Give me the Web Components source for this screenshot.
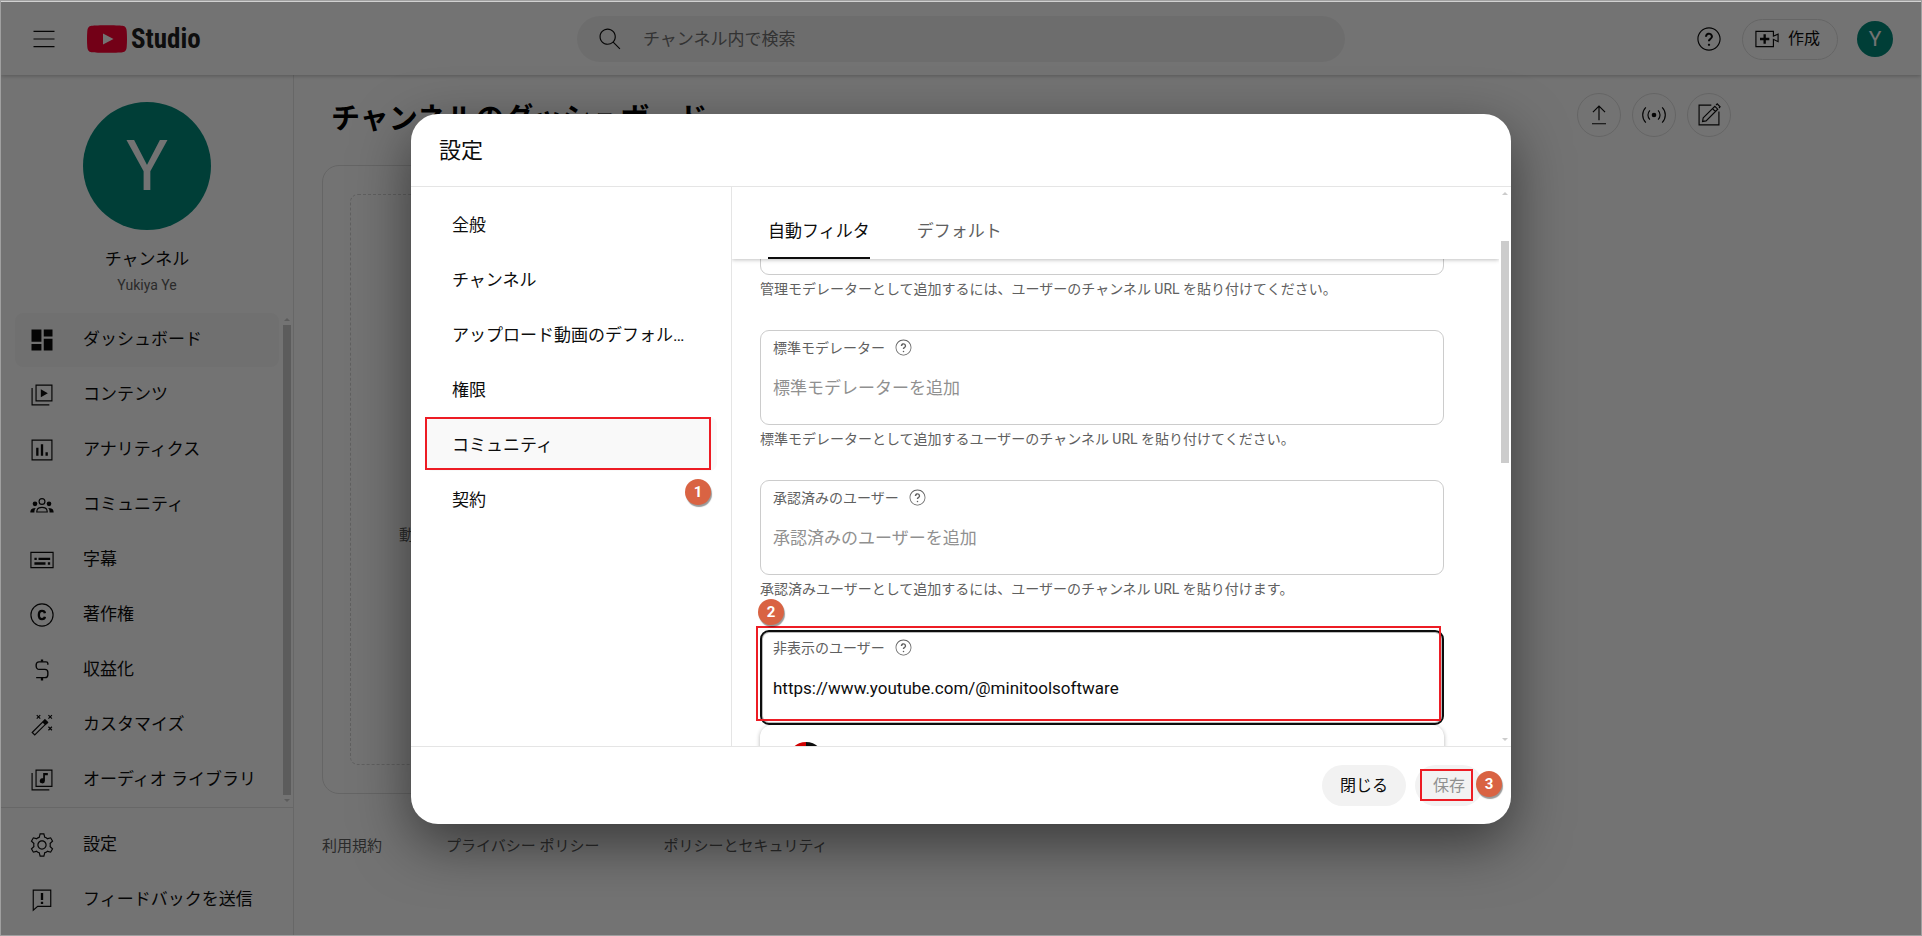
<!DOCTYPE html>
<html lang="ja">
<head>
<meta charset="utf-8">
<title>チャンネルのダッシュボード - YouTube Studio</title>
<style>
  html, body { height: 100%; }
  body {
    margin: 0;
    font-family: Roboto, "Noto Sans CJK JP", sans-serif;
    font-size: 17px;
    line-height: 24px;
    color: #0d0d0d;
    background: #fff;
  }
</style>
</head>
<body>
<studio-app></studio-app>

<script>
const ICONS = {
  menu: '<path d="M21 6H3V5h18zM21 11.500H3v1h18zM21 18H3v1h18z"/>',
  search: '<path d="M20.870 20.170l-5.590-5.590C16.350 13.350 17 11.750 17 10c0-3.870-3.130-7-7-7s-7 3.130-7 7 3.130 7 7 7c1.750 0 3.350-.650 4.580-1.710l5.590 5.590zM10 16c-3.310 0-6-2.690-6-6s2.690-6 6-6 6 2.690 6 6-2.690 6-6 6z"/>',
  help: '<path d="M15.36,9.96c0,1.09-0.67,1.67-1.31,2.24c-0.53,0.47-1.03,0.9-1.16,1.6L12.85,14h-1.75l0.03-0.28c0.14-1.17,0.8-1.76,1.47-2.27c0.52-0.4,1.01-0.77,1.01-1.49c0-0.51-0.23-0.97-0.63-1.29c-0.4-0.31-0.92-0.42-1.42-0.29c-0.59,0.15-1.05,0.67-1.19,1.34L10.32,10H8.57l0.06-0.42c0.2-1.4,1.15-2.53,2.42-2.87c1.05-0.29,2.14-0.08,2.98,0.57C14.88,7.92,15.36,8.9,15.36,9.96z M12,18c0.55,0,1-0.45,1-1s-0.45-1-1-1s-1,0.45-1,1S11.45,18,12,18z M12,3c-4.96,0-9,4.04-9,9s4.04,9,9,9s9-4.04,9-9S16.96,3,12,3 M12,2c5.52,0,10,4.48,10,10s-4.48,10-10,10S2,17.52,2,12S6.48,2,12,2L12,2z"/>',
  create: '<path d="M14,13h-3v3H9v-3H6v-2h3V8h2v3h3V13z M17,6H3v12h14v-6.39l4,1.83V8.56l-4,1.83V6 M18,5v3.83L22,7v8l-4-1.83V19H2V5H18L18,5z"/>',
  dashboard: '<path d="M3 3h8.500v10.500H3zM13.500 3H21v6h-7.500zM3 15.500h8.500V21H3zM13.500 11H21v10h-7.500z"/>',
  content: '<path fill="none" stroke="currentColor" d="M6.900 3.500h13.600v13.600H6.900zM3.500 6v14.500H18.300"/><path d="M11 7l6 3.500-6 3.500z"/>',
  analytics: '<path fill="none" stroke="currentColor" d="M3.500 3.500h17v17h-17z"/><path d="M7 10h2v7H7zM11 7h2v10h-2zM15 14h2v3h-2z"/>',
  community: '<g fill="none" stroke="currentColor"><circle cx="12" cy="9" r="2.500"/><path d="M7.500 18c0-2.600 1.500-4 4.500-4s4.500 1.400 4.500 4z"/></g><circle cx="6" cy="11" r="2"/><circle cx="18" cy="11" r="2"/><path d="M6.700 14.500C5.600 15.700 5.500 17 5.500 18.500H2c0-2.200.9-4 4.700-4zM17.300 14.500c1.100 1.200 1.200 2.500 1.200 4H22c0-2.200-.9-4-4.700-4z"/>',
  subtitles: '<path fill="none" stroke="currentColor" d="M2.500 5.500h19v13h-19z"/><path d="M5.500 10h2v2h-2zM9 10h10v2H9zM5.500 14h9.500v2H5.500zM17 14h2v2h-2z"/>',
  copyright: '<circle cx="12" cy="12" r="9.500" fill="none" stroke="currentColor"/><path fill="none" stroke="currentColor" stroke-width="2" d="M14.500 10.500c-.2-1.300-1.100-2-2.500-2-1.900 0-2.700 1.400-2.700 3.500s.8 3.500 2.700 3.500c1.400 0 2.300-.7 2.500-2"/>',
  money: '<path fill="none" stroke="currentColor" stroke-width="1.200" d="M17 7.500V6.300c0-.9-.6-1.300-1.500-1.300h-6C8 5 7 6 7 7.500v1C7 10 8 11.500 9.500 11.500h5c1.500 0 2.500 1 2.500 2.500v2c0 1.500-1 2.500-2.500 2.500H7"/><path d="M11 3h2v2h-2zM11 18.500h2V21h-2z"/>',
  wand: '<path fill="none" stroke="currentColor" d="M3.600 18.400L14.500 7.500l2.200 2.200L5.800 20.600z"/><path d="M12.300 9.700l2.200-2.700 3 3-2.700 2.200z"/><path fill="none" stroke="currentColor" d="M7.500 3.500l3 3M10.500 3.500l-3 3M17.500 3.500l3 3M20.500 3.500l-3 3M17.500 13.500l3 3M20.500 13.500l-3 3"/>',
  audio: '<path fill="none" stroke="currentColor" d="M6.900 3.500h13.600v14H6.900zM3.500 6v14.500H18.300"/><path d="M13 6h4v2h-2.500v4.700a2.200 2.200 0 1 1-1.500-2.100z"/>',
  settings: '<path d="M12,9c1.650,0,3,1.350,3,3s-1.350,3-3,3s-3-1.350-3-3S10.350,9,12,9 M12,8c-2.210,0-4,1.790-4,4s1.790,4,4,4s4-1.790,4-4 S14.210,8,12,8L12,8z M13.220,3l0.550,2.200l0.130,0.510l0.500,0.180c0.610,0.230,1.190,0.560,1.720,0.980l0.400,0.320l0.500-0.140l2.170-0.620l1.220,2.110 l-1.630,1.590l-0.370,0.360l0.080,0.510c0.050,0.320,0.080,0.640,0.080,0.980s-0.030,0.660-0.080,0.980l-0.080,0.510l0.370,0.360l1.630,1.590l-1.220,2.110 l-2.170-0.620l-0.500-0.140l-0.400,0.320c-0.530,0.430-1.110,0.760-1.720,0.980l-0.500,0.180l-0.130,0.510L13.220,21h-2.440l-0.550-2.200l-0.130-0.510 l-0.500-0.180C9,17.880,8.420,17.550,7.880,17.120l-0.400-0.320l-0.500,0.140l-2.170,0.620L3.600,15.440l1.630-1.590l0.370-0.360l-0.080-0.510 C5.470,12.660,5.440,12.330,5.440,12s0.030-0.660,0.080-0.980l0.080-0.510l-0.370-0.360L3.600,8.560l1.220-2.110l2.170,0.620l0.500,0.140l0.400-0.320 C8.420,6.450,9,6.120,9.610,5.900l0.500-0.180l0.130-0.510L10.780,3H13.220 M14,2h-4L9.260,4.960c-0.730,0.270-1.400,0.660-2,1.140L4.340,5.270l-2,3.460 l2.190,2.130C4.470,11.230,4.440,11.610,4.440,12s0.030,0.770,0.090,1.140l-2.190,2.130l2,3.460l2.920-0.830c0.600,0.480,1.270,0.870,2,1.140L10,22h4 l0.740-2.960c0.730-0.270,1.400-0.660,2-1.140l2.920,0.830l2-3.460l-2.190-2.130c0.060-0.370,0.090-0.750,0.090-1.140s-0.030-0.770-0.090-1.140l2.190-2.130 l-2-3.460L16.740,6.100c-0.600-0.480-1.270-0.870-2-1.140L14,2L14,2z"/>',
  feedback: '<path fill="none" stroke="currentColor" d="M4.500 3.500h15v14H8.300l-3.800 3.300z"/><path d="M11 6h2v6h-2zM11 13.500h2v2h-2z"/>',
  upload: '<path fill="none" stroke="currentColor" d="M12 16.500V4.500M6.800 9.500L12 4.300l5.200 5.200M6 19.500h12"/>',
  live: '<circle cx="12" cy="12" r="2"/><path fill="none" stroke="currentColor" d="M8.500 8a5.600 5.600 0 0 0 0 8M15.500 8a5.600 5.600 0 0 1 0 8M5 5.500a9.200 9.200 0 0 0 0 13M19 5.500a9.200 9.200 0 0 1 0 13"/>',
  edit: '<path fill="none" stroke="currentColor" d="M14 3.500H3.500v17h17V9M7 14.500L17 4.500l2.500 2.500-10 10-3 .5zM15 6.500l2.500 2.500M18 3.500l1-1 2.500 2.500-1 1"/>'
};

const define = (name, html, setup) => customElements.define(name, class extends HTMLElement {
  constructor() {
    super();
    this.attachShadow({ mode: 'open' });
  }
  connectedCallback() {
    const template = document.createElement('template');
    template.innerHTML = typeof html === 'function' ? html(this) : html;
    this.shadowRoot.replaceChildren(template.content.cloneNode(true));
    if (setup) setup(this);
  }
});

define('studio-icon', el => `
  <style>
    :host { display: block; flex: none; width: var(--icon-size, 28px); height: var(--icon-size, 28px); }
    svg { display: block; width: 100%; height: 100%; fill: currentColor; }
  </style>
  <svg viewBox="0 0 24 24" aria-hidden="true">${ICONS[el.getAttribute('name')]}</svg>`);

define('user-avatar', `
  <style>
    :host { display: grid; place-items: center; flex: none; width: 36px; height: 36px; border-radius: 50%;
      background: #00897b; color: #fff; font-size: 21px; line-height: 1; }
    :host([large]) { width: 128px; height: 128px; font-size: 70px; }
  </style>
  <slot></slot>`);

/* Outline around a step's target. */
define('step-outline', `
  <style>:host { display: block; position: absolute; z-index: 2; box-sizing: border-box; border: 2px solid #ed1c24; pointer-events: none; }</style>`);

define('step-badge', `
  <style>
    :host { display: grid; place-items: center; position: absolute; z-index: 3; width: 26px; height: 26px; border-radius: 50%;
      background: #d96343; color: #fff; font-size: 15px; line-height: 20px; font-weight: 700; box-shadow: 1px 2px 1px rgba(0,0,0,.4); }
  </style>
  <slot></slot>`);

define('scroll-track', `
  <style>
    :host { display: flex; flex-direction: column; align-items: center; flex: none; width: 12px; box-sizing: border-box; padding: 5px 0; }
    i { width: 0; height: 0; border: 3px solid transparent; }
    .up { border-top: 0; border-bottom-color: #ccc; }
    .down { border-bottom: 0; border-top-color: #ccc; }
    .rail { flex: 1; width: 8px; padding: var(--before, 4px) 0 var(--after, 4px); display: flex; box-sizing: border-box; }
    .thumb { flex: 1; background: #ccc; }
  </style>
  <i class="up"></i><div class="rail"><div class="thumb"></div></div><i class="down"></i>`);

define('studio-header', `
  <style>
    :host { display: grid; grid-template-columns: 1fr 40% 1fr; align-items: center; flex: none; height: 73px; box-sizing: border-box;
      padding-bottom: 15px; padding-top: 14px; background: #fff; box-shadow: 0 1px 4px rgba(0,0,0,.25); position: relative; z-index: 1; }
    .brand, .tools { display: flex; align-items: center; }
    .brand { padding-left: 29px; gap: 29px; }
    button { font: inherit; color: inherit; background: none; border: 0; padding: 0; cursor: pointer; }
    .logo { display: flex; align-items: center; gap: 4px; color: #212121; text-decoration: none; }
    .logo svg { display: block; width: 40px; height: 28px; }
    .logo span { font: 700 27px/36px "Liberation Sans Narrow", "Roboto Condensed", sans-serif; }
    .search { display: flex; align-items: center; height: 46px; border-radius: 23px; background: #f2f2f2; padding: 0 20px 0 19px; gap: 19px; }
    input { flex: 1; min-width: 0; border: 0; outline: 0; background: none; font: inherit; padding: 0; height: 40px; }
    input::placeholder { color: #717171; opacity: 1; }
    .tools { justify-content: flex-end; padding-right: 28px; gap: 19px; }
    .create { display: flex; align-items: center; gap: 7px; height: 41px; border: 1px solid #e0e0e0; border-radius: 21px; padding: 0 17px 0 10px; font-size: 16px; }
  </style>
  <div class="brand">
    <button aria-label="メニュー"><studio-icon name="menu"></studio-icon></button>
    <a class="logo" href="#" aria-label="YouTube Studio">
      <svg viewBox="0 0 40 28"><path fill="#f03" d="M4.500.8C10 0 30 0 35.500.8 38.500 1.200 39.500 3 39.700 6c.4 5 .4 11 0 16-.2 3-1.200 4.800-4.200 5.200-5.500.8-25.500.8-31 0C1.500 26.800.5 25 .3 22c-.4-5-.4-11 0-16C.5 3 1.500 1.200 4.500.8z"/><path fill="#fff" d="M16 8.500l10.500 5.500L16 19.500z"/></svg>
      <span>Studio</span>
    </a>
  </div>
  <div class="search">
    <studio-icon name="search"></studio-icon>
    <input type="text" aria-label="検索" placeholder="チャンネル内で検索">
  </div>
  <div class="tools">
    <button aria-label="ヘルプ"><studio-icon name="help"></studio-icon></button>
    <button class="create"><studio-icon name="create"></studio-icon>作成</button>
    <user-avatar>Y</user-avatar>
  </div>`);

define('nav-link', el => `
  <style>
    :host { display: block; }
    a { display: flex; align-items: center; gap: 27px; height: 54px; margin-bottom: 1px; padding-left: 13px; border-radius: 8px;
      color: inherit; text-decoration: none; white-space: nowrap; }
    :host([active]) a { background: #f9f9f9; }
    span { padding-bottom: 2px; }
  </style>
  <a href="#"><studio-icon name="${el.getAttribute('icon')}"></studio-icon><span><slot></slot></span></a>`);

define('studio-sidebar', `
  <style>
    :host { display: flex; flex-direction: column; flex: none; width: 293px; box-sizing: border-box; border-right: 1px solid #e5e5e5; }
    .channel { display: flex; flex-direction: column; align-items: center; padding: 27px 0 16px; }
    .channel b { font-weight: 400; margin-top: 17px; }
    .channel small { font-size: 14px; line-height: 24px; color: #606060; margin-top: 2px; }
    .scroller { flex: 1; min-height: 0; display: flex; overflow: hidden; }
    nav { flex: 1; padding: 0 2px 0 14px; }
    .bottom { border-top: 1px solid #e5e5e5; padding: 10px 14px 7px; }
  </style>
  <div class="channel">
    <user-avatar large>Y</user-avatar>
    <b>チャンネル</b>
    <small>Yukiya Ye</small>
  </div>
  <div class="scroller">
    <nav>
      <nav-link icon="dashboard" active>ダッシュボード</nav-link>
      <nav-link icon="content">コンテンツ</nav-link>
      <nav-link icon="analytics">アナリティクス</nav-link>
      <nav-link icon="community">コミュニティ</nav-link>
      <nav-link icon="subtitles">字幕</nav-link>
      <nav-link icon="copyright">著作権</nav-link>
      <nav-link icon="money">収益化</nav-link>
      <nav-link icon="wand">カスタマイズ</nav-link>
      <nav-link icon="audio">オーディオ ライブラリ</nav-link>
    </nav>
    <scroll-track></scroll-track>
  </div>
  <div class="bottom">
    <nav-link icon="settings">設定</nav-link>
    <nav-link icon="feedback">フィードバックを送信</nav-link>
  </div>`);

define('studio-dashboard', `
  <style>
    :host { display: flex; flex-direction: column; flex: 1; min-width: 0; box-sizing: border-box; padding: 18px 190px 0 28px; }
    .top { display: flex; align-items: center; justify-content: space-between; padding-left: 9px; }
    h1 { margin: 0; padding-top: 8px; font-size: 29px; line-height: 36px; font-weight: 700; color: #000; }
    .actions { display: flex; gap: 11px; }
    button { display: grid; place-items: center; width: 44px; height: 44px; padding: 0; border: 1px solid #e0e0e0; border-radius: 50%; background: none; color: inherit; }
    .card { flex: none; display: flex; width: 456px; height: 629px; box-sizing: border-box; margin-top: 28px; padding: 28px 27px; border: 1px solid #e0e0e0; border-radius: 17px; }
    .empty { flex: 1; display: flex; align-items: center; padding: 110px 48px 0; border: 1px dashed #d5d5d5; border-radius: 8px; font-size: 15px; color: #606060; box-sizing: border-box; }
    footer { display: flex; gap: 64px; margin-top: 40px; font-size: 15px; }
    a { color: #606060; text-decoration: none; }
  </style>
  <div class="top">
    <h1>チャンネルのダッシュボード</h1>
    <div class="actions">
      <button aria-label="動画をアップロード"><studio-icon name="upload"></studio-icon></button>
      <button aria-label="ライブ配信を開始"><studio-icon name="live"></studio-icon></button>
      <button aria-label="投稿を作成"><studio-icon name="edit"></studio-icon></button>
    </div>
  </div>
  <div class="card"><div class="empty">動画</div></div>
  <footer>
    <a href="#">利用規約</a>
    <a href="#">プライバシー ポリシー</a>
    <a href="#">ポリシーとセキュリティ</a>
  </footer>`);

define('settings-item', `
  <style>
    :host { display: block; position: relative; margin-bottom: 1px; }
    a { display: block; height: 54px; line-height: 56px; padding: 0 27px; border-radius: 8px; color: inherit; text-decoration: none;
      box-sizing: border-box; overflow: hidden; white-space: nowrap; text-overflow: ellipsis; }
    :host([active]) a { background: #f9f9f9; }
  </style>
  <a href="#"><slot></slot></a>
  <slot name="marks"></slot>`);

define('user-field', el => `
  <style>
    :host { display: block; height: 150px; font-size: 14px; line-height: 20px; color: #606060; }
    .box { position: relative; height: 95px; box-sizing: border-box; border: 1px solid #ccc; border-radius: 9px; padding: 6px 12px 0; }
    .row { display: flex; align-items: center; gap: 9px; height: 21px; --icon-size: 19px; }
    input { display: block; width: 100%; height: 28px; margin-top: 16px; padding: 0; border: 0; outline: 0; background: none; font: inherit; font-size: 17px; line-height: 24px; color: #0d0d0d; }
    input::placeholder { color: #909090; opacity: 1; }
    p { margin: 4px 0 0; }
    :host([focused]) .box { border: 2px solid #0d0d0d; padding: 5px 11px 0; box-shadow: inset 0 0 0 1px #bbb; }
    step-outline { inset: -6px 1px 2px -6px; }
    step-badge { left: -4px; top: -33px; }
  </style>
  <div class="box">
    <div class="row"><label for="v">${el.getAttribute('label')}</label><studio-icon name="help"></studio-icon></div>
    <input id="v" type="text" placeholder="${el.getAttribute('placeholder') || ''}" value="${el.getAttribute('value') || ''}">
    ${el.hasAttribute('step') ? `<step-outline></step-outline><step-badge>${el.getAttribute('step')}</step-badge>` : ''}
  </div>
  ${el.hasAttribute('hint') ? `<p>${el.getAttribute('hint')}</p>` : ''}`);

define('user-suggestion', `
  <style>
    :host { display: block; height: 72px; margin: -55px 0 0; border-radius: 12px; padding: 17px 28px; background: #fff; box-shadow: 0 1px 4px rgba(0,0,0,.3); }
    svg { display: block; width: 36px; height: 36px; }
  </style>
  <svg viewBox="0 0 36 36" aria-hidden="true"><path fill="#d00000" d="M18 0a18 18 0 0 0 0 36z"/><path fill="#0d0d0d" d="M18 0a18 18 0 0 1 0 36z"/></svg>`);

define('settings-dialog', `
  <style>
    :host { display: flex; flex-direction: column; width: min(1100px, 92%); height: min(710px, 92%); border-radius: 27px; background: #fff; overflow: hidden; box-shadow: 0 19px 56px rgba(0,0,0,.5); }
    header { flex: none; padding: 2px 28px 0; border-bottom: 1px solid #e5e5e5; }
    h2 { margin: 0; font-size: 22px; line-height: 70px; font-weight: 400; }
    .body { flex: 1; min-height: 0; display: flex; }
    .menu { flex: none; width: 321px; box-sizing: border-box; border-right: 1px solid #e5e5e5; padding: 10px 14px; }
    .menu step-outline { inset: 0 6px 1px 0; }
    .menu step-badge { right: 6px; top: 62px; }
    .pane { flex: 1; min-width: 0; display: flex; flex-direction: column; }
    .tabs { flex: none; display: flex; gap: 47px; height: 72px; padding-left: 36px; position: relative; z-index: 4; background: #fff; box-shadow: 0 1px 4px rgba(0,0,0,.25); clip-path: inset(0 0 -8px 0); }
    .tabs button { font: inherit; color: #606060; background: none; border: 0; border-bottom: 2px solid transparent; padding: 18px 0 0; }
    .tabs button[aria-selected=true] { color: #0d0d0d; border-bottom-color: #0d0d0d; }
    .fields { flex: 1; min-height: 0; overflow-y: auto; scrollbar-width: none; padding: 0 55px 0 28px; }
    scroll-track { --before: 46px; --after: 275px; }
    .actions { flex: none; display: flex; justify-content: flex-end; gap: 9px; padding: 18px 28px; border-top: 1px solid #e5e5e5; }
    .actions button { font: inherit; font-size: 16px; height: 41px; border: 0; border-radius: 21px; padding: 0 18px; background: #f2f2f2; color: #0d0d0d; }
    .actions button:disabled { color: #909090; }
    .save { position: relative; }
    .save step-outline { inset: 4px 10px 5px 5px; }
    .save step-badge { left: 61px; top: 6px; }
  </style>
  <header><h2>設定</h2></header>
  <div class="body">
    <nav class="menu">
      <settings-item>全般</settings-item>
      <settings-item>チャンネル</settings-item>
      <settings-item>アップロード動画のデフォルト設定</settings-item>
      <settings-item>権限</settings-item>
      <settings-item active>コミュニティ<step-outline slot="marks"></step-outline><step-badge slot="marks">1</step-badge></settings-item>
      <settings-item>契約</settings-item>
    </nav>
    <div class="pane">
      <div class="tabs" role="tablist">
        <button role="tab" aria-selected="true">自動フィルタ</button>
        <button role="tab" aria-selected="false">デフォルト</button>
      </div>
      <div class="fields">
        <user-field label="管理モデレーター" placeholder="管理モデレーターを追加" hint="管理モデレーターとして追加するには、ユーザーのチャンネル URL を貼り付けてください。"></user-field>
        <user-field label="標準モデレーター" placeholder="標準モデレーターを追加" hint="標準モデレーターとして追加するユーザーのチャンネル URL を貼り付けてください。"></user-field>
        <user-field label="承認済みのユーザー" placeholder="承認済みのユーザーを追加" hint="承認済みユーザーとして追加するには、ユーザーのチャンネル URL を貼り付けます。"></user-field>
        <user-field focused step="2" label="非表示のユーザー" value="https://www.youtube.com/@minitoolsoftware"></user-field>
        <user-suggestion></user-suggestion>
      </div>
    </div>
    <scroll-track></scroll-track>
  </div>
  <div class="actions">
    <button>閉じる</button>
    <div class="save"><button disabled>保存</button><step-outline></step-outline><step-badge>3</step-badge></div>
  </div>`,
  el => { el.shadowRoot.querySelector('.fields').scrollTop = 79; });

define('studio-app', `
  <style>
    :host { display: flex; flex-direction: column; position: relative; height: 100vh; box-sizing: border-box; border: 1px solid #a0a0a0; overflow: hidden; }
    .edge { flex: none; height: 1px; background: #dfdfdf; }
    .page { flex: 1; min-height: 0; display: flex; flex-direction: column; position: relative; }
    .columns { flex: 1; min-height: 0; display: flex; }
    .scrim { position: absolute; inset: 0; z-index: 5; display: grid; place-items: center; padding-top: 1px; background: rgba(0,0,0,.55); }
  </style>
  <div class="edge"></div>
  <div class="page">
    <studio-header></studio-header>
    <div class="columns">
      <studio-sidebar></studio-sidebar>
      <studio-dashboard></studio-dashboard>
    </div>
    <div class="scrim"><settings-dialog role="dialog" aria-modal="true" aria-label="設定"></settings-dialog></div>
  </div>`);
</script>
</body>
</html>
